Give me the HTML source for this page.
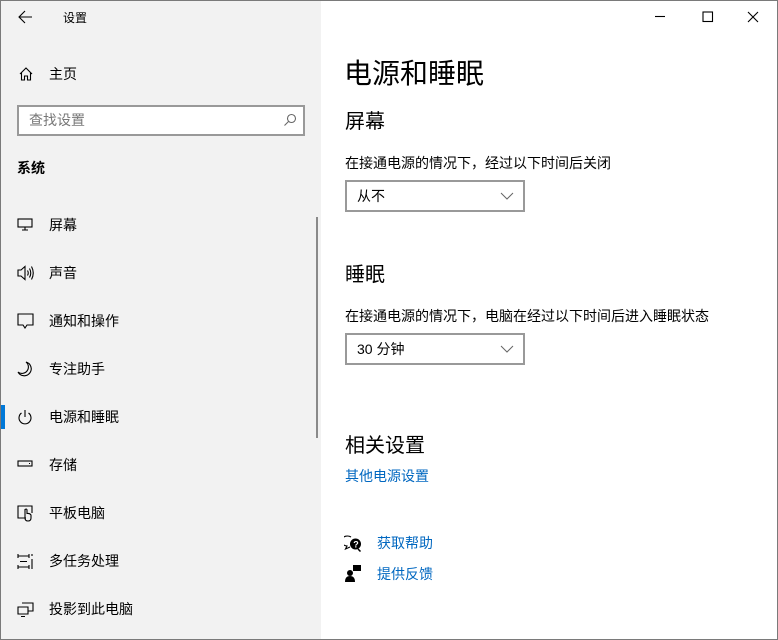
<!DOCTYPE html>
<html><head><meta charset="utf-8"><style>
*{margin:0;padding:0;box-sizing:border-box}
body{width:778px;height:640px;overflow:hidden;background:#fff;font-family:"Liberation Sans","Noto Sans CJK SC",sans-serif;color:#000;position:relative}
.win{position:absolute;left:0;top:0;width:778px;height:640px;border:1px solid #7a7a7a}
.side{position:absolute;left:1px;top:1px;width:320px;height:638px;background:#f2f2f2}
.a{position:absolute;white-space:nowrap}
.nav{position:absolute;left:49px;font-size:14px;line-height:20px}
svg.i{position:absolute;fill:none;stroke:#000;stroke-width:1.1}
.dd{position:absolute;left:345px;width:180px;height:32px;border:2px solid #999;background:#fff;font-size:14px;line-height:28px;padding-left:10px}
.dd svg{position:absolute;right:9px;top:10px}
.lnk{color:#0067c0;font-size:14px}
</style></head><body>
<div class="win"></div>
<div class="side"></div>
<!-- title bar -->
<svg class="i" style="left:17px;top:10px" width="16" height="14" viewBox="0 0 16 14"><path d="M8 1L2 7L8 13M2 7H15"/></svg>
<div class="a" style="left:63px;top:9px;font-size:12px">设置</div>
<svg class="i" style="left:654px;top:10px" width="12" height="12"><path d="M1 6.5H11"/></svg>
<svg class="i" style="left:702px;top:11px" width="12" height="12"><rect x="1" y="1" width="9.5" height="9.5"/></svg>
<svg class="i" style="left:747px;top:11px" width="12" height="12"><path d="M1 1L11 11M11 1L1 11"/></svg>
<!-- home -->
<svg class="i" style="left:18px;top:66px" width="16" height="16"><path d="M2 8L8 2L14 8M3.5 6.5V14H6.5V10H9.5V14H12.5V6.5"/></svg>
<div class="nav" style="top:64px">主页</div>
<!-- search -->
<div class="a" style="left:17px;top:105px;width:288px;height:31px;border:2px solid #999;background:#fff"></div>
<div class="a" style="left:29px;top:110px;font-size:14px;color:#777;line-height:20px">查找设置</div>
<svg class="i" style="left:283px;top:113px;stroke:#666" width="14" height="14"><circle cx="8.5" cy="5.5" r="4"/><path d="M5.5 8.5L1.5 12.5"/></svg>
<div class="a" style="left:17px;top:158px;font-size:14px;font-weight:bold;line-height:20px">系统</div>
<!-- nav items -->
<svg class="i" style="left:17px;top:217px" width="16" height="16"><rect x="1" y="2" width="14" height="8"/><path d="M8 10V13M5 13H11"/></svg>
<div class="nav" style="top:215px">屏幕</div>
<svg class="i" style="left:17px;top:265px" width="18" height="16"><path d="M1 5H4L8 1.5V14.5L4 11H1Z M10.5 5.5Q12 8 10.5 10.5 M12.5 3.5Q15 8 12.5 12.5 M14.5 1.5Q18 8 14.5 14.5"/></svg>
<div class="nav" style="top:263px">声音</div>
<svg class="i" style="left:17px;top:313px" width="17" height="17"><path d="M1 1H16V12H10L8 15L6 12H1Z"/></svg>
<div class="nav" style="top:311px">通知和操作</div>
<svg class="i" style="left:17px;top:361px" width="16" height="17"><path d="M9 1A7 7 0 1 1 1 11A6 6 0 0 0 9 1Z"/></svg>
<div class="nav" style="top:359px">专注助手</div>
<div class="a" style="left:1px;top:405px;width:4px;height:24px;background:#0078d7"></div>
<svg class="i" style="left:17px;top:409px" width="16" height="17"><path d="M4.5 4A6 6 0 1 0 11.5 4M8 1V8"/></svg>
<div class="nav" style="top:407px">电源和睡眠</div>
<svg class="i" style="left:17px;top:459px" width="16" height="10"><rect x="1" y="2" width="14" height="5"/><path d="M12 4.5H13"/></svg>
<div class="nav" style="top:455px">存储</div>
<svg class="i" style="left:17px;top:505px" width="17" height="17"><path d="M9 13H1V1H15V8M8 8.5V4.5Q10 3.5 10 5V8.5Q13 8 14 10V13Q14 16 11 16Q8 16 8 13Z"/></svg>
<div class="nav" style="top:503px">平板电脑</div>
<svg class="i" style="left:17px;top:553px" width="17" height="17"><path d="M1 1V5M1 3H12M12 1V5M1 12V16M1 14H12M12 12V16M3 8.5H10M15 1V3M15 6V16"/></svg>
<div class="nav" style="top:551px">多任务处理</div>
<svg class="i" style="left:17px;top:602px" width="17" height="15"><path d="M5 1H16V9H11M1 5H11V12H1ZM4 14.5H8"/></svg>
<div class="nav" style="top:599px">投影到此电脑</div>
<!-- scrollbar -->
<div class="a" style="left:316px;top:217px;width:2px;height:221px;background:#8a8a8a"></div>
<!-- content -->
<div class="a" style="left:344px;top:56px;font-size:28px;line-height:36px">电源和睡眠</div>
<div class="a" style="left:345px;top:109px;font-size:20px;line-height:26px">屏幕</div>
<div class="a" style="left:345px;top:153px;font-size:14px;line-height:20px">在接通电源的情况下，经过以下时间后关闭</div>
<div class="dd" style="top:180px">从不<svg width="14" height="8" fill="none" stroke="#666"><path d="M1 1L7 7L13 1"/></svg></div>
<div class="a" style="left:345px;top:262px;font-size:20px;line-height:26px">睡眠</div>
<div class="a" style="left:345px;top:306px;font-size:14px;line-height:20px">在接通电源的情况下，电脑在经过以下时间后进入睡眠状态</div>
<div class="dd" style="top:333px">30 分钟<svg width="14" height="8" fill="none" stroke="#666"><path d="M1 1L7 7L13 1"/></svg></div>
<div class="a" style="left:345px;top:433px;font-size:20px;line-height:26px">相关设置</div>
<div class="a lnk" style="left:345px;top:466px;line-height:20px">其他电源设置</div>
<svg style="position:absolute;left:344px;top:535px" width="18" height="17"><path d="M7 2A6 5 0 1 0 3 11L1.5 14L6 12" fill="none" stroke="#000" stroke-width="1.1"/><circle cx="11.5" cy="9" r="5.5" fill="#000"/><text x="9.3" y="12.5" font-size="9" font-weight="bold" fill="#fff" font-family="Liberation Sans">?</text><path d="M14 14L16.5 16.5" stroke="#000" stroke-width="1.5"/></svg>
<div class="a lnk" style="left:377px;top:533px;line-height:20px">获取帮助</div>
<svg style="position:absolute;left:345px;top:565px" width="16" height="17"><rect x="8" y="0" width="8" height="6" fill="#000"/><circle cx="5" cy="8" r="3" fill="#000"/><path d="M0 17Q0 11 5 11Q10 11 10 17Z" fill="#000"/></svg>
<div class="a lnk" style="left:377px;top:564px;line-height:20px">提供反馈</div>
</body></html>
